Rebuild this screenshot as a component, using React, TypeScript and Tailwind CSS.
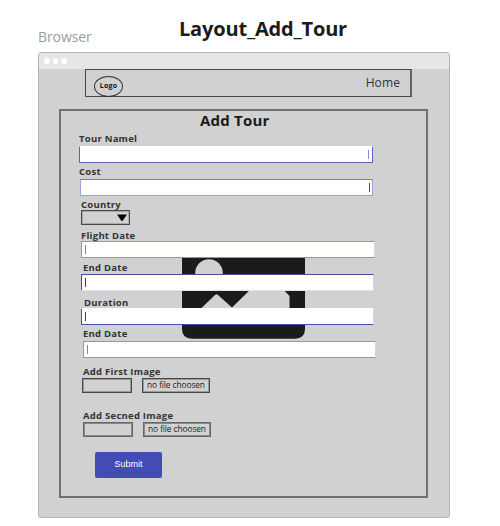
type FieldProps = {
  label: string;
  row: string;
  labelClass: string;
  inputClass: string;
  caretClass: string;
};

function Field({ label, row, labelClass, inputClass, caretClass }: FieldProps) {
  return (
    <div className={`flex flex-col items-start justify-between ${row}`}>
      <Label className={labelClass}>{label}</Label>
      <div className={`flex h-[17px] items-center rounded-[1px] border bg-white ${inputClass}`}>
        <span className={`h-[9px] w-px ${caretClass}`} />
      </div>
    </div>
  );
}

function Label({ children, className }: { children: string; className: string }) {
  return (
    <div className={`h-3 whitespace-nowrap text-[9.500px] leading-[13px] font-bold tracking-[0.25px] text-[#333] ${className}`}>
      {children}
    </div>
  );
}

function FilePicker({ label, row, labelClass, boxClass }: { label: string; row: string; labelClass: string; boxClass: string }) {
  return (
    <div className={`flex h-7 flex-col items-start justify-between ${row}`}>
      <Label className={labelClass}>{label}</Label>
      <div className="flex gap-[10px]">
        <div className={`h-[15px] w-[50px] border ${boxClass}`} />
        <div className={`flex h-[15px] w-[68px] items-center justify-center border pb-[3px] text-[8.4px] leading-[11px] tracking-[-0.1px] whitespace-nowrap text-[#222] ${boxClass}`}>
          no file choosen
        </div>
      </div>
    </div>
  );
}

function ImagePlaceholder() {
  return (
    <svg className="absolute top-[147px] left-[121px]" width="123" height="81" viewBox="182 258 123 81">
      <path d="M182 258H305V329Q305 338.7 295 338.7H192Q182 338.7 182 329Z" fill="#1b1b1b" />
      <circle cx="209" cy="273" r="13.8" fill="#d1d1d1" />
      <path d="M190 319L215 295Q216.5 293.500 218 295L232 307.500L254 286H280L289.500 296V319Z" fill="#d1d1d1" />
    </svg>
  );
}

export default function App() {
  return (
    <div className="h-[526px] w-[500px] overflow-hidden bg-white pl-[38px] font-['Open_Sans',sans-serif]">
      <header className="flex h-[52px]">
        <div className="w-[141px] pt-[27px] text-[14px] leading-[20px] tracking-[-0.1px] text-[#9c9c9c]">Browser</div>
        <h1 className="pt-[15px] text-[20px] leading-[28px] font-bold tracking-[-0.18px] whitespace-nowrap text-[#1b1b1b]">Layout_Add_Tour</h1>
      </header>

      <main className="h-[466px] w-[412px] rounded-[3px] border border-[#b5b5b5] bg-[#d1d1d1]">
        <div className="flex h-4 items-center gap-[3px] rounded-t-[2px] bg-[#e6e6e6] pl-[5px]">
          <i className="size-[5.5px] rounded-full bg-white" />
          <i className="size-[5.5px] rounded-full bg-white" />
          <i className="size-[5.5px] rounded-full bg-white" />
        </div>

        <nav className="ml-[46px] flex h-[28px] w-[327px] justify-between border border-r-2 border-[#484848] border-r-[#666]">
          <div className="mt-[6px] ml-2 flex h-[21px] w-[29px] items-center justify-center rounded-[50%] border border-[#333] text-[7px] font-bold tracking-[0.2px] text-[#111]">
            Logo
          </div>
          <a className="mr-[10px] pt-[4px] text-[12px] leading-[18px] tracking-[0.1px] text-[#333]">Home</a>
        </nav>

        <section className="relative mt-[12px] ml-[20px] flex h-[389px] w-[369px] flex-col items-start border-2 border-[#707070]">
          <ImagePlaceholder />
          <h2 className="ml-[139px] h-[21px] text-[15px] leading-[19px] font-bold tracking-[0.2px] whitespace-nowrap text-[#1b1b1b]">Add Tour</h2>
          <div className="relative flex flex-col items-start">
            <Field label="Tour Namel" row="ml-[18px] h-[31px]" labelClass="" inputClass="w-[294px] justify-end border-[#5865b5] border-t-white pr-[3px]" caretClass="bg-[#8990cb]" />
            <Field label="Cost" row="ml-[18px] mt-[2px] h-[31px]" labelClass="" inputClass="ml-px w-[293px] justify-end border-[#9ba2d5] border-t-[#7079bd] pr-[2px]" caretClass="bg-[#3f4ba5]" />
            <div className="mt-[2px] ml-5 flex h-[27px] flex-col items-start">
              <Label className="">Country</Label>
              <div className="flex h-[15px] w-[49px] items-center justify-end border border-[#484848] pr-[2px] shadow-[inset_0_0_0_1px_#aaa]">
                <svg width="10" height="7" viewBox="0 0 10 7"><path d="M0 .5H10L5.500 7H4.500Z" fill="#050505" /></svg>
              </div>
            </div>
            <Field label="Flight Date" row="ml-5 mt-[4px] h-[29px]" labelClass="" inputClass="w-[294px] border-[#8d95cb] border-r-[#d3d6eb] pl-[3px]" caretClass="bg-[#7981c1]" />
            <Field label="End Date" row="ml-5 mt-[3px] h-[30px]" labelClass="ml-[2px]" inputClass="w-[293px] border-[#4551ab] border-r-[#d3d6eb] border-b-[#dfe1ef] pl-[3px]" caretClass="bg-[#303b98]" />
            <Field label="Duration" row="ml-5 mt-[5px] h-[29px]" labelClass="ml-[3px]" inputClass="w-[293px] border-[#4551ab] border-t-white border-r-[#d3d6eb] pl-[3px]" caretClass="bg-[#303b98]" />
            <Field label="End Date" row="ml-[22px] mt-[2px] h-[31px]" labelClass="" inputClass="w-[293px] border-[#8d95cb] border-r-[#d3d6eb] pl-[3px]" caretClass="bg-[#7981c1]" />
            <FilePicker label="Add First Image" row="ml-[21px] mt-[7px]" labelClass="ml-px" boxClass="border-[#484848] shadow-[inset_0_0_0_1px_#999]" />
            <FilePicker label="Add Secned Image" row="ml-[22px] mt-[16px]" labelClass="" boxClass="border-[#666] shadow-[inset_0_0_0_1px_#888]" />
            <button className="mt-[15px] ml-[34px] h-[26px] w-[67px] rounded-[2px] bg-[#434bb4] font-['Liberation_Sans',sans-serif] text-[9px] text-white">Submit</button>
          </div>
        </section>
      </main>
    </div>
  );
}
